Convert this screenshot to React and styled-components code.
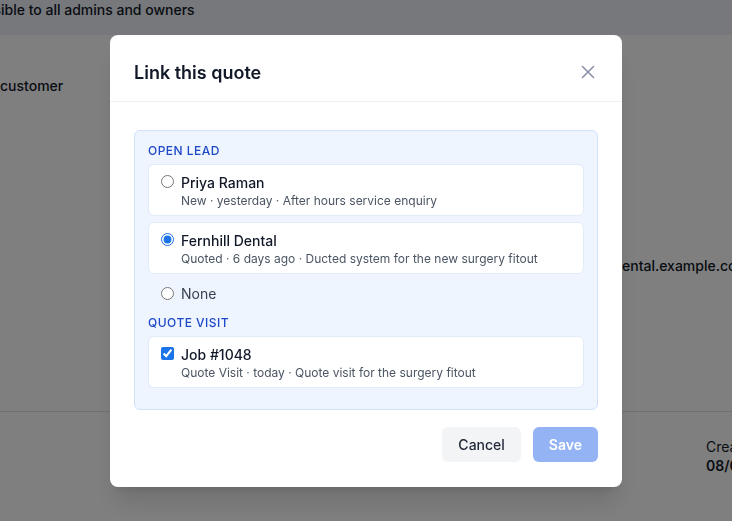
import React from "react";
import styled, { createGlobalStyle } from "styled-components";

const Global = createGlobalStyle`
  html, body { margin: 0; padding: 0; }
  body { font-family: Inter, "Noto Sans", sans-serif; color: #111827; -webkit-font-smoothing: antialiased; }
  * { box-sizing: border-box; }
`;

const Page = styled.div`
  width: 732px;
  height: 521px;
  overflow: hidden;
  background: #ffffff;
  display: flex;
  flex-direction: column;
`;

const Banner = styled.div`
  height: 35px;
  flex: none;
  background: #edf0f7;
  font-size: 14px;
  font-weight: 500;
  line-height: 20px;
  padding-top: 0;
  color: #111827;
  white-space: nowrap;
`;

const BannerText = styled.span`
  display: inline-block;
  margin-left: -20px;
`;

const Details = styled.div`
  height: 377px;
  flex: none;
  display: flex;
  border-bottom: 1px solid #e1e3e8;
`;

const LeftCol = styled.div`
  width: 622px;
  flex: none;
  padding-top: 41px;
  font-size: 14px;
  font-weight: 500;
  line-height: 20px;
`;

const RightCol = styled.div`
  padding-top: 221px;
  font-size: 14px;
  font-weight: 500;
  line-height: 20px;
  white-space: nowrap;
`;

const Bottom = styled.div`
  display: flex;
  padding-left: 706px;
  padding-top: 25px;
  white-space: nowrap;
`;

const Meta = styled.div`
  display: flex;
  flex-direction: column;
  font-size: 14px;
  line-height: 19px;
`;

const MetaValue = styled.span`
  font-weight: 600;
`;

const Overlay = styled.div`
  position: fixed;
  inset: 0;
  background: rgba(0, 0, 0, 0.5);
  display: flex;
  align-items: center;
  justify-content: center;
`;

const Modal = styled.div`
  width: 512px;
  background: #ffffff;
  border-radius: 8px;
  box-shadow: 0 20px 25px -5px rgba(0, 0, 0, 0.12), 0 8px 10px -6px rgba(0, 0, 0, 0.1);
  display: flex;
  flex-direction: column;
`;

const Header = styled.div`
  padding: 24px 24px 14px;
  display: flex;
  align-items: center;
  justify-content: space-between;
  border-bottom: 1px solid #eef0f3;
`;

const Title = styled.h2`
  margin: 0;
  font-size: 18px;
  font-weight: 600;
  line-height: 28px;
  color: #111827;
`;

const CloseButton = styled.button`
  border: 0;
  background: transparent;
  padding: 0;
  width: 20px;
  height: 20px;
  display: flex;
  align-items: center;
  justify-content: center;
  color: #8a92a6;
  margin-top: -2px;
  cursor: pointer;
`;

const Body = styled.div`
  padding: 28px 24px 0;
`;

const Panel = styled.div`
  background: #eef5ff;
  border: 1px solid #cfe0fb;
  border-radius: 6px;
  padding: 12px 13px 21px;
  display: flex;
  flex-direction: column;
`;

const GroupLabel = styled.div`
  font-size: 12px;
  font-weight: 500;
  line-height: 16px;
  letter-spacing: 0.04em;
  text-transform: uppercase;
  color: #1e48c8;
  margin-top: ${(p) => (p.$first ? "0" : "11px")};
  margin-bottom: 5px;
`;

const OptionList = styled.div`
  display: flex;
  flex-direction: column;
  gap: 6px;
`;

const OptionCard = styled.label`
  display: flex;
  align-items: flex-start;
  gap: 7px;
  padding: 8px 12px 6px;
  background: #ffffff;
  border: 1px solid #e2ebf8;
  border-radius: 6px;
  cursor: pointer;
`;

const PlainOption = styled.label`
  display: flex;
  align-items: center;
  gap: 7px;
  padding: 0 13px;
  margin-top: 10px;
  height: 20px;
  font-size: 14px;
  line-height: 20px;
  color: #374151;
  cursor: pointer;
`;

const Control = styled.input`
  margin: 0;
  width: 13px;
  height: 13px;
  flex: none;
  margin-top: ${(p) => (p.$inline ? "0" : "2px")};
  accent-color: #1a73e8;
`;

const OptionText = styled.div`
  display: flex;
  flex-direction: column;
`;

const OptionTitle = styled.span`
  font-size: 14px;
  font-weight: 500;
  line-height: 20px;
  color: #111827;
`;

const OptionSub = styled.span`
  font-size: 12px;
  line-height: 16px;
  color: #4b5563;
`;

const Footer = styled.div`
  display: flex;
  justify-content: flex-end;
  gap: 12px;
  padding: 17px 24px 25px;
`;

const Button = styled.button`
  height: 35px;
  padding: 0 16px;
  border: 0;
  border-radius: 6px;
  font-family: inherit;
  font-size: 14px;
  font-weight: ${(p) => (p.$primary ? 600 : 500)};
  background: ${(p) => (p.$primary ? "#93b3f4" : "#f3f4f6")};
  color: ${(p) => (p.$primary ? "#ffffff" : "#1f2937")};
  cursor: ${(p) => (p.disabled ? "default" : "pointer")};
`;

const leads = [
  { id: "priya", name: "Priya Raman", sub: "New · yesterday · After hours service enquiry" },
  { id: "fernhill", name: "Fernhill Dental", sub: "Quoted · 6 days ago · Ducted system for the new surgery fitout" },
];

export default function App() {
  return (
    <>
      <Global />
      <Page>
        <Banner>
          <BannerText>Visible to all admins and owners</BannerText>
        </Banner>
        <Details>
          <LeftCol>customer</LeftCol>
          <RightCol>ental.example.com</RightCol>
        </Details>
        <Bottom>
          <Meta>
            <span>Created</span>
            <MetaValue>08/05/2025</MetaValue>
          </Meta>
        </Bottom>
      </Page>
      <Overlay>
        <Modal>
          <Header>
            <Title>Link this quote</Title>
            <CloseButton aria-label="Close">
              <svg width="14" height="14" viewBox="0 0 14 14" fill="none" stroke="currentColor" strokeWidth="1.6" strokeLinecap="round">
                <path d="M1.5 1.5l11 11M12.5 1.5l-11 11" />
              </svg>
            </CloseButton>
          </Header>
          <Body>
            <Panel>
              <GroupLabel $first>Open lead</GroupLabel>
              <OptionList>
                {leads.map((l) => (
                  <OptionCard key={l.id}>
                    <Control type="radio" name="lead" defaultChecked={l.id === "fernhill"} />
                    <OptionText>
                      <OptionTitle>{l.name}</OptionTitle>
                      <OptionSub>{l.sub}</OptionSub>
                    </OptionText>
                  </OptionCard>
                ))}
              </OptionList>
              <PlainOption>
                <Control type="radio" name="lead" $inline />
                None
              </PlainOption>
              <GroupLabel>Quote visit</GroupLabel>
              <OptionList>
                <OptionCard>
                  <Control type="checkbox" defaultChecked />
                  <OptionText>
                    <OptionTitle>Job #1048</OptionTitle>
                    <OptionSub>Quote Visit · today · Quote visit for the surgery fitout</OptionSub>
                  </OptionText>
                </OptionCard>
              </OptionList>
            </Panel>
          </Body>
          <Footer>
            <Button>Cancel</Button>
            <Button $primary disabled>Save</Button>
          </Footer>
        </Modal>
      </Overlay>
    </>
  );
}
